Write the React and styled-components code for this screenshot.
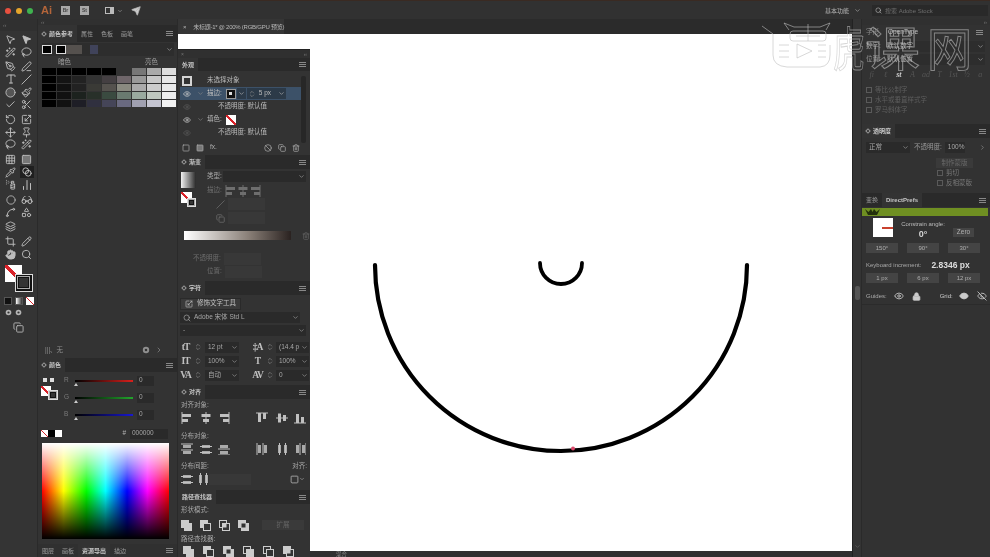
import React from 'react'
import styled, { createGlobalStyle } from 'styled-components'
import {
  MousePointer2, WandSparkles, Lasso, PenTool, PenLine, Type, Slash, Circle, Paintbrush, Check, Scissors,
  RotateCcw, Scaling, Move, Pin, Grid3x3, Square, Pipette, Blend, SprayCan, ChartNoAxesColumn, Glasses,
  Spline, Shapes, Layers, Crop, Pencil, Hand, Search, ChevronDown, ChevronsUpDown, Eye, EyeOff, Lock, Trash2,
  Ban, Copy, Send, ChevronRight
} from 'lucide-react'

const GlobalStyle = createGlobalStyle`
  html, body { margin: 0; padding: 0; background: #333; overflow: hidden; }
  * { box-sizing: border-box; }
`

const Page = styled.div`
  position: relative;
  width: 990px;
  height: 557px;
  overflow: hidden;
  display: flex;
  flex-direction: column;
  background: #333;
  color: #b4b4b4;
  font: 6.5px/1 "Liberation Sans", "Noto Sans CJK SC", sans-serif;
  filter: blur(0.35px);
  svg { display: block; flex: none; }
`

/* ---- title bar ---- */
const TitleBar = styled.div`
  height: 19px;
  flex: none;
  display: flex;
  align-items: center;
  padding: 1px 2px 0 2px;
  background: #313131;
  border-top: 1px solid #3a2a22;
`
const Light = styled.span`
  width: 6px;
  height: 6px;
  margin: 0 2px 0 3px;
  border-radius: 50%;
  background: ${p => p.$c};
`
const AiLogo = styled.span`
  width: 15px;
  margin: 0 5px 0 6px;
  font-size: 11px;
  font-weight: 700;
  color: #b4653a;
`
const AppBadge = styled.span`
  width: 9px;
  height: 9px;
  margin-right: 10px;
  display: flex;
  align-items: center;
  justify-content: center;
  background: #a8a8a8;
  color: #444;
  font-size: 5px;
  font-weight: 700;
`
const LayoutIcon = styled.span`
  width: 9px;
  height: 7px;
  margin-left: 6px;
  border: 1px solid #bbb;
  border-right-width: 4px;
  background: #333;
`
const TitleRight = styled.div`
  margin-left: auto;
  display: flex;
  align-items: center;
  gap: 5px;
  font-size: 6px;
`
const StockSearch = styled.div`
  width: 116px;
  height: 11px;
  margin-left: 6px;
  padding-left: 3px;
  display: flex;
  align-items: center;
  gap: 3px;
  background: #292929;
  color: #6e6e6e;
`

/* ---- main columns ---- */
const Main = styled.div`
  flex: 1;
  min-height: 0;
  display: flex;
`
const ToolBar = styled.div`
  width: 38px;
  flex: none;
  display: flex;
  flex-direction: column;
  align-items: center;
  gap: 2px;
  background: #343434;
  border-right: 1px solid #2a2a2a;
`
const ToolGroup = styled.div`
  width: 32px;
  display: grid;
  grid-template-columns: 1fr 1fr;
  grid-auto-rows: 12.7px;
  place-items: center;
  color: #bdbdbd;
`
const ActiveTool = styled.span`
  padding: 1px 2px;
  background: #1f1f1f;
  color: #ccc;
`
const FillStack = styled.div`
  position: relative;
  width: 28px;
  height: 27px;
  margin-top: 2px;
`
const SmallRow = styled.div`
  display: flex;
  gap: ${p => p.$gap || 3}px;
  align-items: center;
  margin-top: ${p => p.$top || 0}px;
`
const ModeBox = styled.span`
  width: 8px;
  height: 8px;
  background: ${p => p.$bg};
  border: 1px solid #555;
`
const NoneSwatch = styled.span`
  position: ${p => (p.$over ? 'absolute' : 'relative')};
  left: 0;
  top: 0;
  display: block;
  flex: none;
  width: ${p => p.$s}px;
  height: ${p => p.$s}px;
  background: linear-gradient(to top right, #fff 44%, #d8232a 44%, #d8232a 56%, #fff 56%);
`
const StrokeSwatch = styled.span`
  position: absolute;
  right: 0;
  bottom: 0;
  width: ${p => p.$s}px;
  height: ${p => p.$s}px;
  background: #111;
  border: 1px solid #ddd;
  display: flex;
  align-items: center;
  justify-content: center;
  &::after {
    content: '';
    width: 55%;
    height: 55%;
    background: #333;
    border: 1px solid #111;
    outline: 1px solid #aaa;
  }
`

const LeftDock = styled.div`
  width: 140px;
  flex: none;
  display: flex;
  flex-direction: column;
  border-right: 1px solid #2a2a2a;
`
const GripBar = styled.div`
  height: ${p => p.$h || 6}px;
  width: 100%;
  flex: none;
  padding: 0 3px;
  display: flex;
  align-items: center;
  justify-content: ${p => (p.$end ? 'flex-end' : 'space-between')};
  background: #303030;
  color: #777;
  font-size: 5px;
`
const TabRow = styled.div`
  height: ${p => p.$h || 14}px;
  flex: none;
  display: flex;
  align-items: stretch;
  padding-right: 3px;
  background: #2a2a2a;
`
const Tab = styled.span`
  display: flex;
  align-items: center;
  gap: 2px;
  padding: 0 4px;
  font-size: 6px;
  white-space: nowrap;
  background: ${p => (p.$on ? '#333' : 'transparent')};
  color: ${p => (p.$on ? '#c6c6c6' : '#9a9a9a')};
  font-weight: ${p => (p.$on ? 700 : 400)};
  &::before {
    content: '';
    display: ${p => (p.$mark ? 'block' : 'none')};
    width: 2px;
    height: 2px;
    margin-right: 1px;
    border: 1px solid #999;
    transform: rotate(45deg);
  }
`
const PanelMenu = styled.span`
  width: 7px;
  height: 5px;
  margin: auto 1px auto auto;
  border-top: 1px solid #888;
  border-bottom: 1px solid #888;
  background: linear-gradient(#888, #888) center / 100% 1px no-repeat;
`

/* ---- color guide ---- */
const GuidePanel = styled.div`
  flex: 1;
  display: flex;
  flex-direction: column;
  min-height: 0;
`
const GuideBar = styled.div`
  height: 13px;
  margin: 1px 3px 0 4px;
  display: flex;
  align-items: center;
  background: #2d2d2d;
  padding-right: 1px;
`
const GuideKey = styled.span`
  width: ${p => p.$w}px;
  height: ${p => p.$h || 9}px;
  margin-left: ${p => p.$ml || 0}px;
  background: ${p => p.$bg};
  border: ${p => (p.$line ? '1px solid #ddd' : 'none')};
`
const ShadeLabels = styled.div`
  height: 12px;
  padding: 3px 19px 0 20px;
  display: flex;
  justify-content: space-between;
  color: #a0a0a0;
`
const ShadeGrid = styled.div`
  margin: 0 1px 0 4px;
  display: grid;
  grid-template-columns: repeat(9, 1fr);
  grid-auto-rows: 7px;
  gap: 1px;
`
const Shade = styled.span`
  background: ${p => p.$c};
`
const GuideFoot = styled.div`
  margin-top: auto;
  height: 13px;
  padding: 0 14px 3px 7px;
  display: flex;
  align-items: center;
  gap: 5px;
  color: #8f8f8f;
`
const Grow = styled.span`
  flex: 1;
`

/* ---- color panel ---- */
const ColorPanel = styled.div`
  height: 199px;
  flex: none;
  display: flex;
  flex-direction: column;
`
const ColorTop = styled.div`
  height: 55px;
  padding: 3px 0 0 3px;
  display: flex;
`
const ColorChips = styled.div`
  width: 17px;
  margin-right: 6px;
`
const ChipRow = styled.div`
  height: 9px;
  display: flex;
  align-items: center;
  gap: 3px;
  padding-left: 2px;
  margin-bottom: 2px;
`
const TinyChip = styled.span`
  width: 4px;
  height: 4px;
  background: #ddd;
`
const ChipStack = styled.div`
  position: relative;
  width: 17px;
  height: 14px;
`
const Sliders = styled.div`
  display: flex;
  flex-direction: column;
  gap: 6px;
`
const SliderRow = styled.div`
  height: 11px;
  display: flex;
  align-items: center;
  color: #7a7a7a;
`
const SliderLetter = styled.span`
  width: 11px;
`
const Track = styled.span`
  position: relative;
  width: 58px;
  height: 2px;
  margin-right: 4px;
  background: linear-gradient(to right, #000, ${p => p.$c});
  &::after {
    content: '';
    position: absolute;
    left: -1px;
    top: 3px;
    border: 2.5px solid transparent;
    border-top: 0;
    border-bottom: 3px solid #ccc;
  }
`
const NumBox = styled.span`
  width: ${p => p.$w || 17}px;
  height: 10px;
  padding-left: 2px;
  display: flex;
  align-items: center;
  background: #2a2a2a;
  color: #a5a5a5;
`
const HexRow = styled.div`
  height: 13px;
  padding: 0 9px 0 3px;
  display: flex;
  align-items: center;
`
const Chip = styled.span`
  width: 7px;
  height: 7px;
  background: ${p => p.$bg};
`
const Spectrum = styled.div`
  height: 96px;
  margin: 3px 8px 0 4px;
  background:
    linear-gradient(to bottom, #fff 0%, rgba(255, 255, 255, 0) 50%, rgba(0, 0, 0, 0) 50%, #000 100%),
    linear-gradient(to right, #f00 0%, #ff0 17%, #0f0 35%, #0ff 50%, #00f 67%, #f0f 83%, #f00 100%);
`
const FootTabs = styled(TabRow)`
  height: 13px;
  margin-top: auto;
  background: #303030;
`

/* ---- center ---- */
const Center = styled.div`
  flex: 1;
  min-width: 0;
  display: flex;
  flex-direction: column;
  background: #2b2b2b;
`
const DocTab = styled.div`
  width: 106px;
  height: 15px;
  flex: none;
  display: flex;
  align-items: center;
  gap: 7px;
  padding-left: 5px;
  font-size: 6px;
  letter-spacing: -0.25px;
  white-space: nowrap;
  background: #353535;
  color: #b8b8b8;
`
const Canvas = styled.div`
  position: relative;
  flex: 1;
  background: #fff;
`
const Art = styled.svg`
  position: absolute;
  left: 0;
  top: 0;
`
const StatusBar = styled.div`
  height: 6px;
  flex: none;
  padding-left: 158px;
  background: #303030;
  color: #888;
  font-size: 5.5px;
  line-height: 6px;
`
const Gutter = styled.div`
  width: 10px;
  flex: none;
  padding: 267px 2px 0;
  display: flex;
  flex-direction: column;
  align-items: center;
  background: #343434;
  border-left: 1px solid #222;
  border-right: 1px solid #2a2a2a;
  color: #666;
`
const GutterThumb = styled.span`
  width: 5px;
  height: 14px;
  flex: none;
  border-radius: 2px;
  background: #555;
  margin-bottom: 243px;
`

/* ---- floating panel stack ---- */
const FloatStack = styled.div`
  position: absolute;
  left: 0;
  top: 15px;
  bottom: -6px;
  width: 132px;
  display: flex;
  flex-direction: column;
  background: #333;
  border-top: 1px solid #222;
`
const Section = styled.div`
  height: ${p => p.$h}px;
  flex: none;
  display: flex;
  flex-direction: column;
  overflow: hidden;
`
const AppearanceList = styled.div`
  padding-top: 3px;
`
const AppRow = styled.div`
  height: 13px;
  margin: 0 8px 0 2px;
  display: flex;
  align-items: center;
  background: ${p => (p.$on ? '#3c5168' : 'transparent')};
  color: #bcbcbc;
`
const EyeCell = styled.span`
  width: 14px;
  display: flex;
  justify-content: center;
  color: ${p => (p.$dim ? '#5a5a5a' : '#d0d0d0')};
`
const Caret = styled.span`
  width: 13px;
  display: flex;
  justify-content: center;
  color: #8a8a8a;
`
const Indented = styled.span`
  margin-left: ${p => p.$l}px;
  white-space: nowrap;
`
const StrokeKey = styled.span`
  width: 10px;
  height: 10px;
  margin-left: 4px;
  background: #111;
  border: 1px solid #999;
  display: flex;
  align-items: center;
  justify-content: center;
  &::after {
    content: '';
    width: 3px;
    height: 3px;
    background: #ddd;
  }
`
const InlineBox = styled.span`
  height: 11px;
  width: ${p => p.$w}px;
  margin-left: ${p => p.$ml || 0}px;
  padding: 0 1px;
  display: flex;
  align-items: center;
  justify-content: ${p => (p.$center ? 'center' : 'flex-start')};
  gap: 3px;
  background: #2c3a48;
  color: #bbb;
`
const OpenSquare = styled.span`
  width: 10px;
  height: 10px;
  margin-left: 2px;
  border: 2px solid #d4d4d4;
  background: #333;
`
const AppFoot = styled.div`
  height: 13px;
  margin-top: auto;
  padding: 0 10px 2px 4px;
  display: flex;
  align-items: center;
  gap: 6px;
  color: #b0b0b0;
`
const Scroll = styled.span`
  position: absolute;
  right: 4px;
  top: 26px;
  width: 5px;
  height: 67px;
  background: #272727;
  border-radius: 2px;
`
const FormRow = styled.div`
  height: ${p => p.$h || 13}px;
  flex: none;
  margin-top: ${p => p.$mt || 0}px;
  display: flex;
  align-items: center;
  justify-content: ${p => (p.$between ? 'space-between' : 'flex-start')};
  padding: 0 ${p => p.$r ?? 3}px 0 ${p => p.$l ?? 3}px;
  color: ${p => (p.$dim ? '#6e6e6e' : '#a8a8a8')};
  white-space: nowrap;
`
const Field = styled.span`
  width: ${p => p.$w}px;
  height: ${p => p.$h || 11}px;
  margin-left: ${p => p.$ml || 0}px;
  padding: 0 1px 0 3px;
  display: flex;
  flex: none;
  align-items: center;
  justify-content: space-between;
  background: ${p => (p.$flat ? '#383838' : '#2a2a2a')};
  color: #a8a8a8;
  white-space: nowrap;
  overflow: hidden;
`
const GradientTop = styled.div`
  display: flex;
`
const GradientLeft = styled.div`
  width: 29px;
  flex: none;
  padding: 3px 0 0 3px;
  display: flex;
  flex-direction: column;
`
const GradientRight = styled.div`
  flex: 1;
  display: flex;
  flex-direction: column;
`
const GradientThumb = styled.span`
  display: block;
  width: 15px;
  height: 16px;
  background: linear-gradient(to right, #f2f2f2, #2a2a2a);
`
const GradientStack = styled.span`
  position: relative;
  display: block;
  width: 15px;
  height: 15px;
  margin-top: 4px;
`
const GradientBar = styled.span`
  display: block;
  width: 107px;
  height: 9px;
  background: linear-gradient(to right, #fff, #8a8078 60%, #2a2220);
`
const BarRow = styled.div`
  margin-top: 6px;
  padding-left: 6px;
  display: flex;
  align-items: center;
  gap: 5px;
  color: #666;
`
const LabelledRows = styled.div`
  margin-top: 12px;
`
const ToolButton = styled.span`
  height: 12px;
  padding: 0 4px;
  display: flex;
  align-items: center;
  gap: 4px;
  background: #3a3a3a;
  border: 1px solid #2a2a2a;
  color: #c0c0c0;
`
const CharGrid = styled.div`
  display: grid;
  grid-template-columns: 72px 58px;
  grid-auto-rows: 14px;
  padding: 2px 0 0 1px;
`
const CharCell = styled.div`
  display: flex;
  align-items: center;
  gap: 2px;
  color: #aaa;
`
const CharGlyph = styled.span`
  width: 13px;
  text-align: center;
  font: 700 9.5px "Liberation Serif", serif;
  color: #c0c0c0;
  white-space: nowrap;
  letter-spacing: -1px;
`
const IconStrip = styled.div`
  height: ${p => p.$h || 14}px;
  flex: none;
  display: flex;
  align-items: center;
  padding: 0 ${p => p.$r ?? 5}px 0 ${p => p.$l ?? 3}px;
  color: #c0c0c0;
  gap: ${p => p.$gap || 0}px;
`
const GlyphGap = styled.span`
  width: ${p => p.$w}px;
  flex: none;
`
const FlatButton = styled.span`
  width: ${p => p.$w}px;
  height: ${p => p.$h || 10}px;
  display: flex;
  align-items: center;
  justify-content: center;
  background: ${p => p.$bg || '#3a3a3a'};
  color: ${p => p.$c || '#666'};
  flex: none;
`

/* ---- right dock ---- */
const RightDock = styled.div`
  width: 128px;
  flex: none;
  display: flex;
  flex-direction: column;
  background: #323232;
`
const OpenTypeHead = styled.div`
  height: 14px;
  flex: none;
  padding: 0 6px 0 4px;
  display: flex;
  align-items: center;
  gap: 9px;
  color: #8a8a8a;
`
const HeadStrong = styled.span`
  color: #c0c0c0;
`
const OpenTypeField = styled.div`
  height: 12px;
  flex: none;
  margin: 1px 5px 0 4px;
  display: flex;
  align-items: center;
  color: #999;
`
const OpenTypeLabel = styled.span`
  width: 19px;
  flex: none;
`
const OpenTypeValue = styled.span`
  flex: 1;
  height: 11px;
  padding: 0 1px 0 2px;
  display: flex;
  align-items: center;
  justify-content: space-between;
  background: #2d2d2d;
  color: #b4b4b4;
`
const GlyphRow = styled.div`
  height: 14px;
  margin-top: 2px;
  padding: 0 3px;
  display: grid;
  grid-template-columns: repeat(9, 1fr);
  place-items: center;
  font: italic 8px "Liberation Serif", serif;
  color: #555;
`
const GlyphOn = styled.b`
  color: #cfcfcf;
`
const CheckLine = styled.div`
  height: 10px;
  display: flex;
  align-items: center;
  gap: 3px;
  padding-left: ${p => p.$l || 3}px;
  color: ${p => p.$c || '#5e5e5e'};
`
const CheckBlock = styled.div`
  padding: 4px 0 0 1px;
`
const Box = styled.span`
  width: 6px;
  height: 6px;
  flex: none;
  border: 1px solid #5a5a5a;
`
const OpacityRow = styled.div`
  height: 14px;
  margin-top: 2px;
  padding: 0 4px;
  display: flex;
  align-items: center;
  color: #999;
`
const MaskButton = styled.div`
  width: 37px;
  height: 10px;
  margin: 4px 0 0 74px;
  display: flex;
  align-items: center;
  justify-content: center;
  background: #3a3a3a;
  color: #6a6a6a;
`
const GreenBand = styled.div`
  height: 8px;
  flex: none;
  margin: 1px 2px 0 0;
  padding-left: 3px;
  display: flex;
  align-items: center;
  background: #6f8f22;
`
const PrefsTop = styled.div`
  height: 25px;
  flex: none;
  margin-top: 2px;
  padding: 0 16px 0 11px;
  display: flex;
`
const AngleThumb = styled.div`
  width: 20px;
  height: 19px;
  flex: none;
  background: #fff;
  display: flex;
  align-items: center;
  justify-content: flex-end;
  &::after {
    content: '';
    width: 11px;
    height: 2px;
    background: #c9412f;
  }
`
const AngleInfo = styled.div`
  flex: 1;
  padding-top: 3px;
  display: flex;
  flex-direction: column;
  align-items: center;
  gap: 3px;
  font-size: 6px;
  color: #bcbcbc;
`
const AngleValue = styled.b`
  font-size: 9px;
  color: #d4d4d4;
`
const ZeroCell = styled.div`
  padding-top: 10px;
`
const PrefButtons = styled.div`
  height: 10px;
  flex: none;
  padding: 0 10px 0 4px;
  display: flex;
  justify-content: space-between;
`
const PrefButton = styled.span`
  width: 32px;
  height: 10px;
  display: flex;
  align-items: center;
  justify-content: center;
  background: #444;
  color: #b0b0b0;
  font-size: 6px;
`
const IncrementRow = styled.div`
  height: 20px;
  flex: none;
  padding: 4px 0 0 4px;
  display: flex;
  align-items: center;
  gap: 10px;
  font-size: 6px;
  color: #aaa;
`
const Increment = styled.b`
  font-size: 8.5px;
  color: #ddd;
`
const GuidesRow = styled.div`
  height: 17px;
  flex: none;
  margin-top: 5px;
  padding: 0 6px 0 4px;
  display: flex;
  align-items: center;
  font-size: 6px;
  color: #aaa;
  border-bottom: 1px solid #2b2b2b;
`
const GuideIcon = styled.span`
  margin-left: ${p => p.$l}px;
  color: #ccc;
`

/* ---- watermark ---- */
const Watermark = styled.div`
  position: absolute;
  left: 760px;
  top: 21px;
  display: flex;
  align-items: center;
  pointer-events: none;
`
const WatermarkGlyph = styled.span`
  display: block;
  width: ${p => p.$w}px;
  margin-left: ${p => p.$l || 0}px;
  transform: scaleX(${p => p.$x});
  transform-origin: left center;
  font: 400 47px/50px "Noto Sans CJK SC", sans-serif;
  color: transparent;
  -webkit-text-stroke: 1px rgba(190, 190, 190, 0.6);
  white-space: nowrap;
`

const NoteIcon = ({ s = 9 }) => (
  <svg width={s} height={s} viewBox="0 0 10 10" fill="currentColor"><circle cx="5" cy="5" r="4" /><circle cx="5" cy="5" r="1.6" fill="#333" /></svg>
)

const place = (at, len) => (at === 0 ? 1 : at === 1 ? (12 - len) / 2 : 11 - len)

// align glyph: an axis and two bars lined up against it
const AlignGlyph = ({ axis, at }) => {
  const line = at === 0 ? 0.5 : at === 1 ? 5.5 : 10.5
  return axis === 'v' ? (
    <svg width="12" height="12" viewBox="0 0 12 12" fill="currentColor">
      <rect x={line} y="0" width="1" height="12" />
      <rect x={place(at, 9)} y="2" width="9" height="3" />
      <rect x={place(at, 6)} y="7" width="6" height="3" />
    </svg>
  ) : (
    <svg width="12" height="12" viewBox="0 0 12 12" fill="currentColor">
      <rect y={line} x="0" height="1" width="12" />
      <rect y={place(at, 9)} x="2" height="9" width="3" />
      <rect y={place(at, 6)} x="7" height="6" width="3" />
    </svg>
  )
}

// distribute glyph: two lines with a block on each
const DistGlyph = ({ axis, at }) => {
  const a = at === 0 ? 0 : at === 1 ? 2.5 : 5
  return axis === 'h' ? (
    <svg width="12" height="12" viewBox="0 0 12 12" fill="currentColor">
      <rect x="0" y={a + 0.5} width="12" height="1" />
      <rect x="0" y={a + 6.5} width="12" height="1" />
      <rect x="2" y={2} width="8" height="3" opacity=".85" />
      <rect x="2" y={8} width="8" height="3" opacity=".85" />
    </svg>
  ) : (
    <svg width="12" height="12" viewBox="0 0 12 12" fill="currentColor">
      <rect y="0" x={a + 0.5} height="12" width="1" />
      <rect y="0" x={a + 6.5} height="12" width="1" />
      <rect y="2" x={2} height="8" width="3" opacity=".85" />
      <rect y="2" x={8} height="8" width="3" opacity=".85" />
    </svg>
  )
}

// pathfinder glyph: two overlapping squares
const PathGlyph = ({ back = '#ccc', front = '#ccc', mid }) => (
  <svg width="11" height="11" viewBox="0 0 11 11">
    <rect x="0.5" y="0.5" width="7" height="7" fill={back} stroke="#ccc" />
    <rect x="3.5" y="3.5" width="7" height="7" fill={front} stroke="#ccc" />
    {mid && <rect x="3.5" y="3.5" width="4" height="4" fill={mid} />}
  </svg>
)

const CrownLogo = () => (
  <svg width="15" height="6" viewBox="0 0 15 6" fill="#23300c">
    <path d="M0 0l3 6h9l3-6-3.5 3L9 0 7.5 3 6 0 3.5 3z" />
  </svg>
)

const TigerMark = () => (
  <svg width="72" height="50" viewBox="0 0 72 50" fill="none" stroke="rgba(190,190,190,.6)" strokeWidth="1" strokeLinejoin="round">
    <path d="M2 5L13 13V34Q13 45 27 46H60Q70 45 70 34V24" />
    <path d="M19 24h10M19 30h10M19 36h10M58 24h8M58 30h8M58 36h8" />
    <path d="M29 9L24 2L34 6H60L70 2L66 9" />
    <rect x="30" y="10" width="36" height="10" rx="3" />
    <path d="M48 3V20M36 15H60" />
    <path d="M37 23L52 30L37 37Z" />
  </svg>
)

const toolRows = [
  [<MousePointer2 size={11} />, <MousePointer2 size={11} fill="currentColor" />, <WandSparkles size={11} />, <Lasso size={11} />],
  [<PenTool size={11} />, <PenLine size={11} />, <Type size={12} />, <Slash size={11} />, <Circle size={11} fill="#555" />, <Paintbrush size={11} />, <Check size={11} />, <Scissors size={11} />],
  [<RotateCcw size={11} />, <Scaling size={11} />, <Move size={11} />, <Pin size={11} />, <Lasso size={11} />, <WandSparkles size={11} />],
  [<Grid3x3 size={11} />, <Square size={11} fill="#777" />, <Pipette size={11} />, <ActiveTool><Blend size={10} /></ActiveTool>, <SprayCan size={11} />, <ChartNoAxesColumn size={12} />],
  [<Circle size={10} />, <Glasses size={12} />, <Spline size={11} />, <Shapes size={11} />],
  [<Layers size={11} />, <span />],
  [<Crop size={11} />, <Pencil size={11} />, <Hand size={11} fill="currentColor" />, <Search size={11} />],
]

const shades = [
  ['#000', '#000', '#000', '#000', '#000', '#333', '#777', '#aaa', '#ddd'],
  ['#000', '#141414', '#222', '#333', '#443f42', '#6f666a', '#999', '#c8c8c8', '#e6e6e6'],
  ['#000', '#111', '#222', '#3a3a36', '#55524e', '#8a8a80', '#aaa', '#ccc', '#e8e8e8'],
  ['#000', '#111', '#1c221e', '#283029', '#3a4a40', '#6a7a70', '#9aaa9f', '#c0c8c0', '#eee'],
  ['#000', '#111', '#1e1e26', '#30303f', '#454558', '#6a6a80', '#a0a0b0', '#c4c4d0', '#f2f2f2'],
]

const chev = <ChevronDown size={7} />
const spin = <ChevronsUpDown size={8} color="#8a8a8a" />

const charRows = [
  ['tT', '12 pt', '‡A', '(14.4 p'],
  ['IT', '100%', 'T', '100%'],
  ['VA', '自动', 'AV', '0'],
]

const App = () => (
  <Page>
    <GlobalStyle />
    <TitleBar>
      <Light $c="#e8503f" /><Light $c="#e5a52b" /><Light $c="#3fb34f" />
      <AiLogo>Ai</AiLogo>
      <AppBadge>Br</AppBadge>
      <AppBadge>St</AppBadge>
      <LayoutIcon />
      <GlyphGap $w={3} />
      <ChevronDown size={6} />
      <GlyphGap $w={8} />
      <Send size={10} fill="#ccc" />
      <TitleRight>
        基本功能 <ChevronDown size={7} />
        <StockSearch><Search size={7} color="#bbb" /> 搜索 Adobe Stock</StockSearch>
      </TitleRight>
    </TitleBar>

    <Main>
      <ToolBar>
        <GripBar $h={12}>‹‹</GripBar>
        {toolRows.map((group, g) => (
          <ToolGroup key={g}>
            {group.map((icon, i) => <React.Fragment key={i}>{icon}</React.Fragment>)}
          </ToolGroup>
        ))}
        <FillStack>
          <NoneSwatch $s={17} $over />
          <StrokeSwatch $s={18} />
        </FillStack>
        <SmallRow $gap={3} $top={3}><ModeBox $bg="#111" /><ModeBox $bg="linear-gradient(to right,#fff,#333)" /><NoneSwatch $s={8} /></SmallRow>
        <SmallRow $gap={3} $top={2}><NoteIcon s={7} /><NoteIcon s={7} /><GlyphGap $w={7} /></SmallRow>
        <SmallRow $top={4}><Copy size={11} /></SmallRow>
      </ToolBar>

      <LeftDock>
        <GuidePanel>
          <GripBar>‹‹</GripBar>
          <TabRow $h={17}>
            <Tab $on $mark>颜色参考</Tab><Tab>属性</Tab><Tab>色板</Tab><Tab>画笔</Tab>
            <PanelMenu />
          </TabRow>
          <GuideBar>
            <GuideKey $w={10} $bg="#000" $line />
            <GuideKey $w={10} $ml={4} $bg="#000" $line />
            <GuideKey $w={16} $bg="#55514e" />
            <GuideKey $w={8} $ml={8} $bg="#40435a" />
            <Grow />
            {chev}
          </GuideBar>
          <ShadeLabels><span>暗色</span><span>亮色</span></ShadeLabels>
          <ShadeGrid>
            {shades.flat().map((c, i) => <Shade key={i} $c={c} />)}
          </ShadeGrid>
          <GuideFoot>
            <span>|||、无</span>
            <Grow />
            <NoteIcon s={8} />
            <ChevronRight size={8} />
          </GuideFoot>
        </GuidePanel>
        <ColorPanel>
          <TabRow><Tab $on $mark>颜色</Tab><PanelMenu /></TabRow>
          <ColorTop>
            <ColorChips>
              <ChipRow><TinyChip /><TinyChip /></ChipRow>
              <ChipStack><NoneSwatch $s={10} $over /><StrokeSwatch $s={10} /></ChipStack>
            </ColorChips>
            <Sliders>
              <SliderRow><SliderLetter>R</SliderLetter><Track $c="#d8201c" /><NumBox>0</NumBox></SliderRow>
              <SliderRow><SliderLetter>G</SliderLetter><Track $c="#22a52c" /><NumBox>0</NumBox></SliderRow>
              <SliderRow><SliderLetter>B</SliderLetter><Track $c="#1818d0" /><NumBox>0</NumBox></SliderRow>
            </Sliders>
          </ColorTop>
          <HexRow>
            <NoneSwatch $s={7} /><Chip $bg="#000" /><Chip $bg="#fff" />
            <Grow />
            <span>#</span><GlyphGap $w={4} />
            <NumBox $w={38}>000000</NumBox>
          </HexRow>
          <Spectrum />
          <FootTabs>
            <Tab>图层</Tab><Tab>画板</Tab><Tab $on>资源导出</Tab><Tab>描边</Tab>
            <PanelMenu />
          </FootTabs>
        </ColorPanel>
      </LeftDock>

      <Center>
        <DocTab>× <span>未标题-1* @ 200% (RGB/GPU 预览)</span></DocTab>
        <Canvas>
          <Art width="674" height="517" viewBox="178 34 674 517" fill="none" stroke="#000" strokeLinecap="round">
            <path d="M375 265A186 186 0 0 0 747 265" strokeWidth="4.2" />
            <path d="M540 263A21 21 0 0 0 582 263" strokeWidth="3.8" />
            <circle cx="573" cy="448.5" r="2" fill="#d9486a" stroke="none" />
          </Art>
          <FloatStack>
            <GripBar $h={8}><span>×</span><span>‹‹</span></GripBar>
            <Section $h={97}>
              <TabRow $h={13}><Tab $on>外观</Tab><PanelMenu /></TabRow>
              <AppearanceList>
                <AppRow><OpenSquare /><Indented $l={15}>未选择对象</Indented></AppRow>
                <AppRow $on>
                  <EyeCell><Eye size={8} /></EyeCell><Caret>{chev}</Caret>
                  描边:<StrokeKey />
                  <InlineBox $w={9} $ml={1} $center>{chev}</InlineBox>
                  <InlineBox $w={39} $ml={1}>{spin}5 px<Grow />{chev}</InlineBox>
                </AppRow>
                <AppRow><EyeCell $dim><Eye size={8} /></EyeCell><Indented $l={24}>不透明度: 默认值</Indented></AppRow>
                <AppRow>
                  <EyeCell><Eye size={8} /></EyeCell><Caret>{chev}</Caret>
                  填色:<GlyphGap $w={4} /><NoneSwatch $s={10} />
                </AppRow>
                <AppRow><EyeCell $dim><Eye size={8} /></EyeCell><Indented $l={24}>不透明度: 默认值</Indented></AppRow>
              </AppearanceList>
              <AppFoot>
                <Square size={8} /><Square size={8} fill="#777" /><span>fx.</span>
                <Grow />
                <Ban size={8} /><Copy size={8} /><Trash2 size={8} />
              </AppFoot>
            </Section>
            <Scroll />

            <TabRow><Tab $on $mark>渐变</Tab><PanelMenu /></TabRow>
            <Section $h={112}>
              <GradientTop>
                <GradientLeft>
                  <GradientThumb />
                  <GradientStack><NoneSwatch $s={11} $over /><StrokeSwatch $s={9} /></GradientStack>
                </GradientLeft>
                <GradientRight>
                  <FormRow $h={15} $l={0} $r={4}>类型:<Field $w={83} $ml={1}><span />{chev}</Field></FormRow>
                  <FormRow $dim $l={0}>描边:<GlyphGap $w={3} /><AlignGlyph axis="v" at={0} /><AlignGlyph axis="v" at={1} /><AlignGlyph axis="v" at={2} /></FormRow>
                  <FormRow $dim $l={9} $h={14}><Slash size={9} /><Field $flat $w={37} $ml={3} $h={12}>{' '}</Field></FormRow>
                  <FormRow $dim $l={9} $h={14}><Copy size={9} /><Field $flat $w={37} $ml={3} $h={12}>{' '}</Field></FormRow>
                </GradientRight>
              </GradientTop>
              <BarRow><GradientBar /><GlyphGap $w={1} /><Trash2 size={8} /></BarRow>
              <LabelledRows>
                <FormRow $dim $l={15}>不透明度:<Field $flat $w={37} $ml={3} $h={12}>{' '}</Field></FormRow>
                <FormRow $dim $l={29}>位置:<Field $flat $w={37} $ml={3} $h={12}>{' '}</Field></FormRow>
              </LabelledRows>
            </Section>

            <TabRow><Tab $on $mark>字符</Tab><PanelMenu /></TabRow>
            <Section $h={90}>
              <FormRow $h={17} $l={2}><ToolButton><Scaling size={8} />修饰文字工具</ToolButton></FormRow>
              <FormRow $h={11} $l={2}><Field $w={120}><Search size={8} /><Indented $l={3}>Adobe 宋体 Std L</Indented><Grow />{chev}</Field></FormRow>
              <FormRow $h={15} $l={2}><Field $w={126}>-<Grow />{chev}</Field></FormRow>
              <CharGrid>
                {charRows.flatMap((row, r) => [
                  <CharCell key={`${r}a`}>
                    <CharGlyph>{row[0]}</CharGlyph>{spin}
                    <Field $w={34} $ml={1}>{row[1]}{chev}</Field>
                  </CharCell>,
                  <CharCell key={`${r}b`}>
                    <CharGlyph>{row[2]}</CharGlyph>{spin}
                    <Field $w={33}>{row[3]}{chev}</Field>
                  </CharCell>,
                ])}
              </CharGrid>
            </Section>

            <TabRow><Tab $on $mark>对齐</Tab><PanelMenu /></TabRow>
            <Section $h={91}>
              <FormRow $h={12}>对齐对象:</FormRow>
              <IconStrip>
                <AlignGlyph axis="v" at={0} /><GlyphGap $w={7} /><AlignGlyph axis="v" at={1} /><GlyphGap $w={6} /><AlignGlyph axis="v" at={2} />
                <GlyphGap $w={26} />
                <AlignGlyph axis="h" at={0} /><GlyphGap $w={8} /><AlignGlyph axis="h" at={1} /><GlyphGap $w={6} /><AlignGlyph axis="h" at={2} />
              </IconStrip>
              <FormRow $h={12} $mt={5}>分布对象:</FormRow>
              <IconStrip>
                <DistGlyph axis="h" at={0} /><GlyphGap $w={7} /><DistGlyph axis="h" at={1} /><GlyphGap $w={6} /><DistGlyph axis="h" at={2} />
                <GlyphGap $w={26} />
                <DistGlyph axis="v" at={0} /><GlyphGap $w={8} /><DistGlyph axis="v" at={1} /><GlyphGap $w={6} /><DistGlyph axis="v" at={2} />
              </IconStrip>
              <FormRow $h={12} $mt={4} $between>分布间距:<span>对齐:</span></FormRow>
              <IconStrip>
                <DistGlyph axis="h" at={1} /><GlyphGap $w={4} /><DistGlyph axis="v" at={1} />
                <FlatButton $w={42} $h={11} $bg="#383838" />
                <Grow />
                <Square size={9} strokeDasharray="2 2" /><ChevronDown size={6} />
              </IconStrip>
            </Section>

            <TabRow><Tab $on>路径查找器</Tab><PanelMenu /></TabRow>
            <Section $h={53}>
              <FormRow $h={13}>形状模式:</FormRow>
              <IconStrip $h={16}>
                <PathGlyph /><GlyphGap $w={8} />
                <PathGlyph back="#ccc" front="#333" /><GlyphGap $w={8} />
                <PathGlyph back="#333" front="#333" mid="#ccc" /><GlyphGap $w={8} />
                <PathGlyph back="#ccc" front="#ccc" mid="#333" />
                <GlyphGap $w={13} />
                <FlatButton $w={42}>扩展</FlatButton>
              </IconStrip>
              <FormRow $h={12}>路径查找器:</FormRow>
              <IconStrip $h={12} $gap={9} $l={5}>
                <PathGlyph /><PathGlyph front="#333" /><PathGlyph mid="#333" /><PathGlyph back="#333" mid="#ccc" /><PathGlyph back="#333" front="#333" /><PathGlyph front="#333" mid="#ccc" />
              </IconStrip>
            </Section>
          </FloatStack>
        </Canvas>
        <StatusBar>混合</StatusBar>
      </Center>

      <Gutter><GutterThumb /><ChevronDown size={7} /></Gutter>

      <RightDock>
        <GripBar $end>››</GripBar>
        <Section $h={99}>
          <OpenTypeHead>
            <span>字形</span><HeadStrong>OpenType</HeadStrong><PanelMenu />
          </OpenTypeHead>
          <OpenTypeField><OpenTypeLabel>数字:</OpenTypeLabel><OpenTypeValue>默认数字{chev}</OpenTypeValue></OpenTypeField>
          <OpenTypeField><OpenTypeLabel>位置:</OpenTypeLabel><OpenTypeValue>默认位置{chev}</OpenTypeValue></OpenTypeField>
          <GlyphRow>
            <span>fi</span><span>ℓ</span><GlyphOn>st</GlyphOn><span>A</span><span>ad</span><span>T</span><span>1st</span><span>½</span><span>a</span>
          </GlyphRow>
          <CheckBlock>
            <CheckLine><Box />等比公制字</CheckLine>
            <CheckLine><Box />水平或垂直样式字</CheckLine>
            <CheckLine><Box />罗马斜体字</CheckLine>
          </CheckBlock>
        </Section>

        <TabRow><Tab $on $mark>透明度</Tab><PanelMenu /></TabRow>
        <Section $h={55}>
          <OpacityRow>
            <Field $w={44}>正常{chev}</Field>
            <GlyphGap $w={4} />不透明度:<GlyphGap $w={3} />
            <Field $w={20}>100%</Field>
            <Grow /><ChevronRight size={7} />
          </OpacityRow>
          <MaskButton>制作蒙版</MaskButton>
          <GlyphGap $w={1} />
          <CheckLine $l={75} $c="#7a7a7a"><Box />剪切</CheckLine>
          <CheckLine $l={75} $c="#7a7a7a"><Box />反相蒙版</CheckLine>
        </Section>

        <TabRow><Tab>变换</Tab><Tab $on>DirectPrefs</Tab><PanelMenu /></TabRow>
        <GreenBand><CrownLogo /></GreenBand>
        <PrefsTop>
          <AngleThumb />
          <AngleInfo>Constrain angle:<AngleValue>0°</AngleValue></AngleInfo>
          <ZeroCell><FlatButton $w={21} $h={9} $bg="#444" $c="#b0b0b0">Zero</FlatButton></ZeroCell>
        </PrefsTop>
        <PrefButtons><PrefButton>150°</PrefButton><PrefButton>90°</PrefButton><PrefButton>30°</PrefButton></PrefButtons>
        <IncrementRow>Keyboard increment:<Increment>2.8346 px</Increment></IncrementRow>
        <PrefButtons><PrefButton>1 px</PrefButton><PrefButton>6 px</PrefButton><PrefButton>12 px</PrefButton></PrefButtons>
        <GuidesRow>
          Guides:
          <GuideIcon $l={7}><Eye size={10} /></GuideIcon>
          <GuideIcon $l={8}><Lock size={9} fill="currentColor" /></GuideIcon>
          <GuideIcon $l={19}>Grid:</GuideIcon>
          <GuideIcon $l={6}><Eye size={10} fill="currentColor" /></GuideIcon>
          <GuideIcon $l={8}><EyeOff size={10} /></GuideIcon>
        </GuidesRow>
      </RightDock>
    </Main>

    <Watermark>
      <TigerMark />
      <WatermarkGlyph $w={32} $l={1} $x={0.68}>虎</WatermarkGlyph>
      <WatermarkGlyph $w={62} $x={1.17}>课</WatermarkGlyph>
      <WatermarkGlyph $w={45} $x={0.96}>网</WatermarkGlyph>
    </Watermark>
  </Page>
)

export default App
